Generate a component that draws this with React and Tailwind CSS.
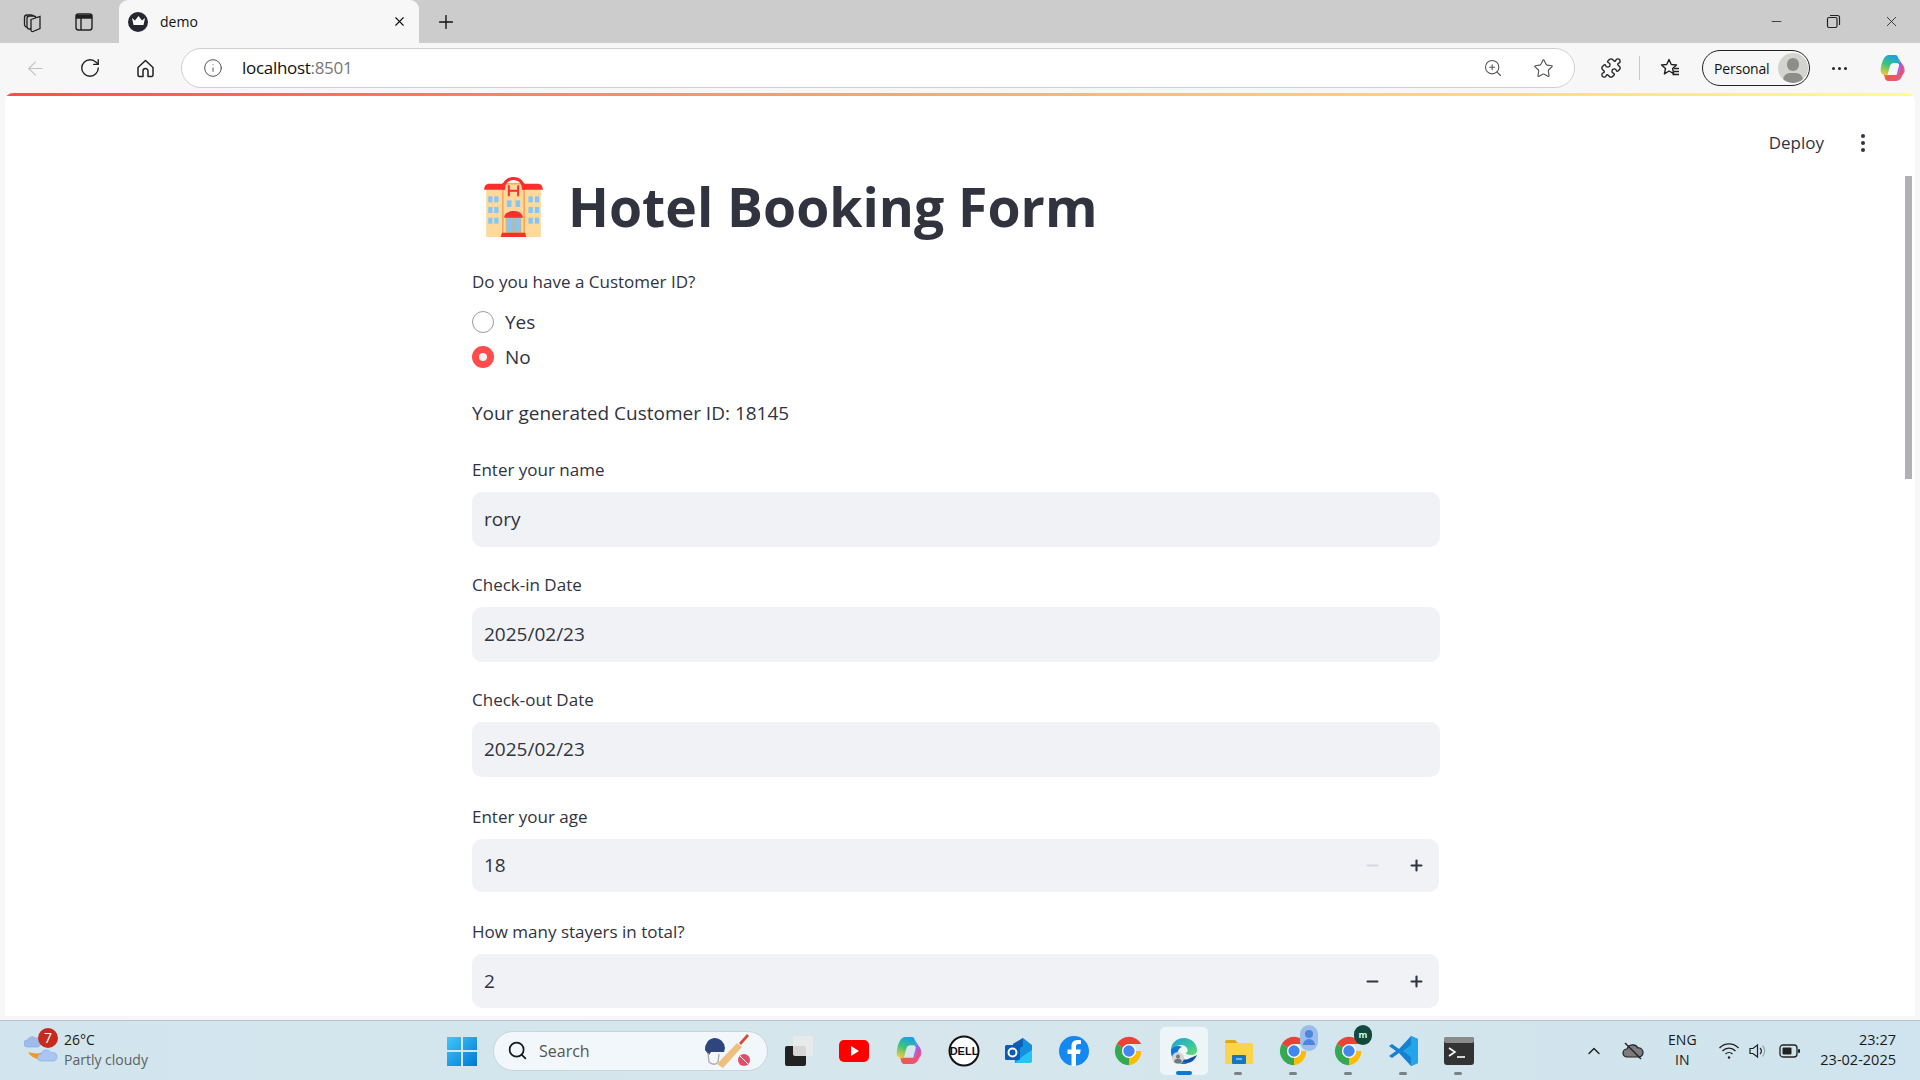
import { ArrowLeft, RotateCw, Info, ZoomIn, Star, Puzzle, Plus, X, Minus, ChevronUp, Search } from "lucide-react";

const uiFont = { fontFamily: '"Open Sans", "Noto Sans", sans-serif' };

function Workspaces() {
  return (
    <svg width="22" height="22" viewBox="0 0 22 22" fill="none" stroke="#222" strokeWidth="1.3">
      <rect x="2.5" y="4" width="9" height="12" rx="2.5" />
      <rect x="5" y="5" width="9" height="13" rx="2.5" fill="#ccc" />
      <path d="M9 8.5l9-3v12l-7 3a1.5 1.5 0 0 1-2-1.5z" fill="#ccc" />
    </svg>
  );
}

function VerticalTabs() {
  return (
    <svg width="20" height="20" viewBox="0 0 20 20" fill="none" stroke="#222" strokeWidth="1.4">
      <rect x="2" y="2" width="16" height="16" rx="2.5" />
      <path d="M2.5 3.5h15v2.5h-15z" fill="#222" />
      <path d="M7 6v12" />
    </svg>
  );
}

function HomeIcon() {
  return (
    <svg width="21" height="21" viewBox="0 0 21 21" fill="none" stroke="#222" strokeWidth="1.5" strokeLinejoin="round">
      <path d="M3 9.5L10.5 2.5 18 9.5V17a1.5 1.5 0 0 1-1.5 1.5H13V13a2.5 2.5 0 0 0-5 0v5.5H4.5A1.5 1.5 0 0 1 3 17z" />
    </svg>
  );
}

function Favorites() {
  return (
    <svg width="22" height="22" viewBox="0 0 22 22" fill="none" stroke="#222" strokeWidth="1.4" strokeLinejoin="round">
      <path d="M10 2.5l2.3 5 5.2.5-3.900 3.500 1.100 5.200L10 14l-4.600 2.900 1.100-5.400L2.500 8l5.200-.5z" />
      <path d="M15 11.500h5M15 14.500h5M13.500 17.500h6.500" />
    </svg>
  );
}

function Copilot({ size = 28, id = "a" }) {
  return (
    <svg width={size} height={size} viewBox="0 0 28 28">
      <defs>
        <linearGradient id={`copL${id}`} x1="0.6" y1="0" x2="0.2" y2="1">
          <stop offset="0" stopColor="#1aa0e8" />
          <stop offset="0.5" stopColor="#3cc47a" />
          <stop offset="1" stopColor="#f6c93a" />
        </linearGradient>
        <linearGradient id={`copR${id}`} x1="0.3" y1="0" x2="0.8" y2="1">
          <stop offset="0" stopColor="#2f6fe6" />
          <stop offset="0.6" stopColor="#a85ce8" />
          <stop offset="1" stopColor="#d96ad8" />
        </linearGradient>
        <linearGradient id={`copB${id}`} x1="0" y1="0" x2="1" y2="1">
          <stop offset="0" stopColor="#f5a030" />
          <stop offset="0.5" stopColor="#f0503c" />
          <stop offset="1" stopColor="#e84aa0" />
        </linearGradient>
      </defs>
      <path d="M10 1h6c1.500 0 2.500 1 3 2.500L21 9h-6c-2 0-3.500 1-4 3l-2.500 9H5C2 21 1 17 2 13 3 8 5 1 10 1z" fill={`url(#copL${id})`} />
      <path d="M15 1h1c1.500 0 2.500 1 3 2.500L25 13c1.500 4 .5 8-3 8h-4.500l2.500-9c.5-2-1-3-2.500-3H21l-2-5.500C18 2 17 1 15 1z" fill={`url(#copR${id})`} />
      <path d="M9 27c-1.500 0-2.500-1-3-2.500L5 21h12.500c2 0 3-1 3.500-3l3-8c1.500 8-1 17-7 17z" fill={`url(#copB${id})`} opacity="0.95" />
    </svg>
  );
}

function Chrome({ size = 26 }) {
  return (
    <svg width={size} height={size} viewBox="0 0 48 48">
      <path d="M24 24L6.700 14A20 20 0 0 1 41.300 14H24z" fill="#ea4335" />
      <path d="M24 24h17.300A20 20 0 0 1 24 44z" fill="#fbbc04" />
      <path d="M24 24v20A20 20 0 0 1 6.700 14z" fill="#34a853" />
      <circle cx="24" cy="24" r="10" fill="#fff" />
      <circle cx="24" cy="24" r="8" fill="#4285f4" />
    </svg>
  );
}

function Edge() {
  return (
    <svg width="30" height="30" viewBox="0 0 30 30">
      <defs>
        <linearGradient id="edgeA" x1="0" y1="0" x2="1" y2="1">
          <stop offset="0" stopColor="#2a9fd8" />
          <stop offset="0.6" stopColor="#37c6a0" />
          <stop offset="1" stopColor="#6fdc5f" />
        </linearGradient>
      </defs>
      <path d="M2 13C3 6 8 2 15 2c7 0 13 5 13 12 0 3-2 5-6 5-3 0-5-1-5-2 2-1 2-3 1-5-2-3-6-4-10-2-3 1.500-5 2-6 3z" fill="url(#edgeA)" />
      <path d="M2 13c3-3 8-4 11-2-3 1-5 4-4 8 1 4 5 8 10 8-2 1-3 1-5 1C7 28 1 22 2 13z" fill="#0c78d4" />
      <path d="M28 19c-2 5-6 8-10 8-3 0-6-2-7-5 3 2 7 2 10 0 3-1 5-2 7-3z" fill="#1450a8" />
      <circle cx="9" cy="22" r="6" fill="#d5d5d5" />
      <circle cx="9" cy="20.500" r="2" fill="#777" />
      <path d="M5 26c.5-2.500 2-3.500 4-3.500s3.500 1 4 3.500a6 6 0 0 1-8 0z" fill="#777" />
    </svg>
  );
}

function HotelEmoji() {
  const sideYs = [58, 90, 122];
  const sideXs = [12, 30, 133, 152];
  return (
    <svg width="59" height="60" viewBox="0 0 176 180" className="shrink-0">
      <rect x="6" y="30" width="164" height="150" fill="#ffd99c" />
      <rect x="56" y="20" width="64" height="160" fill="#ffd99c" stroke="#f4a95e" strokeWidth="5" />
      <path d="M0 38c0-12 6-18 16-18h44v18zM176 38c0-12-6-18-16-18h-44v18z" fill="#f92f2f" />
      <path d="M54 38V32C54 14 68 0 88 0s34 14 34 32v6h-9v-6c0-12-11-23-25-23S63 20 63 32v6z" fill="#f92f2f" />
      <path d="M74 25v33M102 25v33M74 41h28" stroke="#f92f2f" strokeWidth="6" fill="none" />
      {sideYs.map((y) => sideXs.map((x) => <rect key={`${x}-${y}`} x={x} y={y} width="13" height="18" fill="#85c6f5" />))}
      <rect x="68" y="70" width="14" height="20" fill="#85c6f5" />
      <rect x="94" y="70" width="14" height="20" fill="#85c6f5" />
      <rect x="66" y="120" width="44" height="46" fill="#85c6f5" stroke="#dcae7a" strokeWidth="3" />
      <path d="M88 120v46" stroke="#dcae7a" strokeWidth="6" />
      <path d="M60 122c0-12 12-20 28-20s28 8 28 20z" fill="#f92f2f" />
      <path d="M50 180l3-13h70l3 13z" fill="#f92f2f" />
    </svg>
  );
}

function Field({ label, value, children, className = "", inputClass = "h-[55px] w-full" }) {
  return (
    <div className={`flex flex-col ${className}`}>
      <div className="h-[25px] text-[17px] leading-[25px] text-[#31333f]">{label}</div>
      <div className={`mt-[10px] flex items-center rounded-[10px] bg-[#f0f2f6] pl-[12px] text-[19px] text-[#31333f] ${inputClass}`}>
        <span className="flex-1">{value}</span>
        {children}
      </div>
    </div>
  );
}

function NumberButtons({ minusOff }) {
  return (
    <div className="flex items-center gap-[27px] pr-[14px]">
      <Minus size={17} strokeWidth={3} className={minusOff ? "text-[#d5d8e2]" : "text-[#31333f]"} />
      <Plus size={17} strokeWidth={3} className="text-[#31333f]" />
    </div>
  );
}

function TaskIcon({ children, dot, active }) {
  return (
    <div className={`relative flex h-[48px] w-[48px] items-center justify-center rounded-[5px] ${active ? "bg-[#edf5f8]" : ""}`}>
      {children}
      {dot && <span className="absolute bottom-0 left-[19px] h-[3px] w-[8px] rounded-full bg-[#7b8184]" />}
      {active && <span className="absolute bottom-0 left-[16px] h-[4px] w-[16px] rounded-full bg-[#0a78d6]" />}
    </div>
  );
}

export default function App() {
  return (
    <div className="flex h-[1080px] w-[1920px] flex-col overflow-hidden bg-[#f7f7f7]" style={uiFont}>
      {/* tab strip */}
      <div className="flex h-[43px] items-center bg-[#cccccc]">
        <div className="flex w-[119px] items-center gap-[30px] pl-[22px]">
          <Workspaces />
          <VerticalTabs />
        </div>
        <div className="flex h-full w-[300px] items-center rounded-t-[9px] bg-[#f7f7f7] pl-[9px] pr-[12px]">
          <span className="flex h-[20px] w-[20px] items-center justify-center rounded-full bg-[#262730]">
            <svg width="13" height="11" viewBox="0 0 13 11"><path d="M0 2l3 2.500L6.500 0 10 4.500 13 2l-1.500 7h-10z" fill="#fff" /></svg>
          </span>
          <span className="ml-[12px] flex-1 text-[14px] text-[#111]">demo</span>
          <X size={15} strokeWidth={1.8} className="text-[#111]" />
        </div>
        <Plus size={22} strokeWidth={1.5} className="ml-[16px] text-[#111]" />
        <div className="flex-1" />
        <div className="flex items-center gap-[42px] pr-[20px] text-[#222]">
          <Minus size={15} strokeWidth={1.3} />
          <svg width="15" height="15" viewBox="0 0 15 15" fill="none" stroke="#222" strokeWidth="1.200">
            <rect x="1.500" y="3.500" width="9.500" height="10" rx="1.500" />
            <path d="M4 1.500h7.500a2 2 0 0 1 2 2V11" />
          </svg>
          <X size={17} strokeWidth={1.2} />
        </div>
      </div>

      {/* toolbar */}
      <div className="flex h-[50px] items-center">
        <ArrowLeft size={23} strokeWidth={1.2} className="ml-[24px] text-[#c4c4c4]" />
        <RotateCw size={22} strokeWidth={1.5} className="ml-[32px] text-[#222]" />
        <span className="ml-[34px]"><HomeIcon /></span>
        <div className="ml-[25px] flex h-[40px] w-[1394px] items-center rounded-full border border-[#d0d0d0] bg-white pl-[21px] pr-[20px]">
          <Info size={20} strokeWidth={1.2} className="text-[#555]" />
          <span className="ml-[19px] flex-1 text-[17px] tracking-[-0.3px] text-[#111]">localhost<span className="text-[#777]">:8501</span></span>
          <ZoomIn size={20} strokeWidth={1.3} className="text-[#555]" />
          <Star size={21} strokeWidth={1.3} className="ml-[30px] text-[#555]" />
        </div>
        <Puzzle size={22} strokeWidth={1.5} className="ml-[25px] text-[#222]" />
        <span className="ml-[17px] h-[24px] w-px bg-[#c8c8c8]" />
        <span className="ml-[19px]"><Favorites /></span>
        <div className="ml-[21px] flex h-[36px] w-[108px] items-center justify-between rounded-full border-[1.5px] border-[#222] pl-[11px] pr-[1px]">
          <span className="text-[14px] tracking-[-0.2px] text-[#111]">Personal</span>
          <span className="relative h-[30px] w-[30px] overflow-hidden rounded-full bg-[#d3d3cf]">
            <span className="absolute left-[9px] top-[5px] h-[13px] w-[12px] rounded-full bg-[#8d8d89]" />
            <span className="absolute left-[5px] top-[20px] h-[14px] w-[20px] rounded-full bg-[#8d8d89]" />
          </span>
        </div>
        <div className="ml-[22px] flex gap-[3px]">
          <span className="h-[3px] w-[3px] rounded-full bg-[#222]" />
          <span className="h-[3px] w-[3px] rounded-full bg-[#222]" />
          <span className="h-[3px] w-[3px] rounded-full bg-[#222]" />
        </div>
        <span className="ml-[32px]"><Copilot id="top" /></span>
      </div>

      {/* page */}
      <div className="relative mx-[5px] h-[923px] overflow-hidden rounded-t-[8px] bg-white">
        <div className="h-[3px] bg-gradient-to-r from-[#ff4b4b] to-[#ffff85]" />

        <div className="absolute right-[50px] top-[37px] flex items-center gap-[37px] text-[#31333f]">
          <span className="text-[17px]">Deploy</span>
          <div className="flex flex-col gap-[3px]">
            <span className="h-[4px] w-[4px] rounded-full bg-[#31333f]" />
            <span className="h-[4px] w-[4px] rounded-full bg-[#31333f]" />
            <span className="h-[4px] w-[4px] rounded-full bg-[#31333f]" />
          </div>
        </div>
        <div className="absolute right-[3px] top-[83px] h-[303px] w-[7px] bg-[#b0b0b5]" />

        <div className="ml-[467px] w-[968px] text-[#31333f]">
          <h1 className="mt-[77px] flex h-[68px] items-center pl-[12px] text-[53.500px] font-bold">
            <HotelEmoji />
            <span className="ml-[25px]">Hotel Booking Form</span>
          </h1>

          <div className="mt-[28px] h-[25px] text-[17px] leading-[25px]">Do you have a Customer ID?</div>
          <div className="mt-[14px] flex h-[28px] items-center text-[19px]">
            <span className="h-[22px] w-[22px] rounded-full border border-[#9a9ca3] bg-white" />
            <span className="ml-[11px]">Yes</span>
          </div>
          <div className="mt-[7px] flex h-[28px] items-center text-[19px]">
            <span className="flex h-[22px] w-[22px] items-center justify-center rounded-full bg-[#ff4b4b]">
              <span className="h-[8px] w-[8px] rounded-full bg-[#f0f2f6]" />
            </span>
            <span className="ml-[11px]">No</span>
          </div>
          <div className="mt-[27px] h-[30px] text-[19px] leading-[30px]">Your generated Customer ID: 18145</div>

          <div className="mt-[29px] flex flex-col gap-[25px]">
            <Field label="Enter your name" value="rory" />
            <Field label="Check-in Date" value="2025/02/23" />
            <Field label="Check-out Date" value="2025/02/23" />
            <Field label="Enter your age" value="18" className="mt-[2px]" inputClass="h-[53px] w-[967px]">
              <NumberButtons minusOff />
            </Field>
            <Field label="How many stayers in total?" value="2" className="mt-[2px]" inputClass="h-[54px] w-[967px]">
              <NumberButtons />
            </Field>
          </div>
        </div>
      </div>

      {/* taskbar */}
      <div className="relative mt-[4px] flex h-[60px] items-center border-t border-[#b4c3cc] bg-gradient-to-r from-[#d2e5ee] via-[#d6e6ec] to-[#cfe4ee]">
        <div className="flex w-[447px] items-center pl-[24px]">
          <div className="relative h-[36px] w-[36px]">
            <svg width="36" height="36" viewBox="0 0 36 36" className="absolute left-0 top-0">
              <path d="M4 19a15 13 0 0 0 25 3l-7-4c-5 3-12 3-18 1z" fill="#f29a1f" />
              <path d="M3 14a3.500 3.500 0 0 1 .5-7 5 5 0 0 1 8-2 4 4 0 0 1 2 9z" fill="#9dbcec" stroke="#7fa4dc" strokeWidth="0.600" />
              <path d="M17 28a3.500 3.500 0 0 1 0-7 5.500 5.500 0 0 1 10-1.500 4.500 4.500 0 0 1 3 8.500z" fill="#a8c6f0" stroke="#86a9e0" strokeWidth="0.600" />
            </svg>
            <span className="absolute left-[14px] top-[-5px] flex h-[20px] w-[20px] items-center justify-center rounded-full bg-[#c42b1c] text-[14px] text-white">7</span>
          </div>
          <div className="ml-[4px] flex flex-col text-[14px] leading-[20px]">
            <span className="mt-[-2px] text-[#1a1a1a]">26°C</span>
            <span className="text-[#5c6164]">Partly cloudy</span>
          </div>
        </div>

        <svg width="30" height="30" viewBox="0 0 30 30">
          <defs>
            <linearGradient id="win" x1="0" y1="0" x2="1" y2="1">
              <stop offset="0" stopColor="#3fc8fa" />
              <stop offset="1" stopColor="#0078d4" />
            </linearGradient>
          </defs>
          <path d="M0 1h14v13H0zM16 1h14v13H16zM0 16h14v14H0zM16 16h14v14H16z" fill="url(#win)" />
        </svg>

        <div className="ml-[16px] flex h-[40px] w-[275px] items-center rounded-full border border-[#c6d5dc] bg-[#f1f7fb] pl-[13px] pr-[11px]">
          <Search size={21} strokeWidth={2} className="text-[#1a1a1a]" />
          <span className="ml-[11px] flex-1 text-[16px] text-[#555]">Search</span>
          <svg width="50" height="36" viewBox="0 0 50 36" className="ml-[-3px] mr-[3px]">
            <path d="M2 17a10 11 0 0 1 20-2l-1 4H8l-2 3z" fill="#2f4580" />
            <path d="M5 20l1 9c3 3 7 3 9 0l1-8" fill="none" stroke="#aaa" strokeWidth="1.300" />
            <path d="M14 31L34 10l5 4-19 21z" fill="#eec07d" />
            <path d="M36 10l8-9 2 2-8 9z" fill="#d84a3a" />
            <circle cx="41" cy="27" r="6" fill="#e84a6a" />
            <path d="M37 23l8 8" stroke="#fff" strokeWidth="1" />
          </svg>
        </div>

        <div className="ml-[7px] flex items-center gap-[7px]">
          <TaskIcon>
            <span className="relative h-[30px] w-[30px]">
              <span className="absolute bottom-0 left-[1px] h-[20px] w-[21px] rounded-[2px] bg-[#222]" />
              <span className="absolute right-[1px] top-0 h-[20px] w-[20px] rounded-[2px] bg-[#eaeaea] opacity-90" />
            </span>
          </TaskIcon>
          <TaskIcon>
            <svg width="30" height="30" viewBox="0 0 30 30">
              <rect x="0" y="4" width="30" height="22" rx="5" fill="#f00" />
              <path d="M12 10l8 5-8 5z" fill="#fff" />
            </svg>
          </TaskIcon>
          <TaskIcon><Copilot size={29} id="bar" /></TaskIcon>
          <TaskIcon>
            <svg width="32" height="32" viewBox="0 0 32 32">
              <circle cx="16" cy="16" r="14.500" fill="#fff" stroke="#111" strokeWidth="2" />
              <text x="16" y="20" textAnchor="middle" fontSize="11" fontWeight="700" fill="#111" fontFamily="Liberation Sans, sans-serif">DELL</text>
            </svg>
          </TaskIcon>
          <TaskIcon>
            <svg width="30" height="30" viewBox="0 0 30 30">
              <path d="M9 8l10-6 9 7v15a3 3 0 0 1-3 3H11z" fill="#1490df" />
              <path d="M9 8l10-6v8l-10 6z" fill="#0f5fb5" />
              <path d="M28 14l-9 6-8 7h14a3 3 0 0 0 3-3z" fill="#28c4f0" />
              <rect x="1" y="9" width="15" height="15" rx="1.500" fill="#0a5bb5" />
              <circle cx="8.500" cy="16.500" r="4" fill="none" stroke="#fff" strokeWidth="2" />
            </svg>
          </TaskIcon>
          <TaskIcon>
            <svg width="30" height="30" viewBox="0 0 30 30">
              <circle cx="15" cy="15" r="15" fill="#1487f0" />
              <path d="M17 30V18h4l.7-4.500H17v-3c0-1.500.7-2.500 2.500-2.500H22V4.200C21 4 19.800 4 18.500 4 15 4 12.500 6 12.500 10v3.500H8.500V18h4v12z" fill="#fff" />
            </svg>
          </TaskIcon>
          <TaskIcon><Chrome size={34} /></TaskIcon>
          <TaskIcon active><Edge /></TaskIcon>
          <TaskIcon dot>
            <svg width="30" height="30" viewBox="0 0 30 30">
              <path d="M1 6a2 2 0 0 1 2-2h8l3 3h-13z" fill="#e2a81a" />
              <rect x="1" y="7" width="28" height="21" rx="1.500" fill="#fcd34d" />
              <rect x="8" y="19" width="14" height="9" rx="1" fill="#1477c4" />
              <path d="M12 23h6" stroke="#bfe0fa" strokeWidth="1.200" />
            </svg>
          </TaskIcon>
          <TaskIcon dot>
            <span className="relative">
              <Chrome size={34} />
              <span className="absolute right-[-7px] top-[-9px] flex h-[26px] w-[18px] flex-col items-center justify-center rounded-full bg-[#9cbcec]">
                <span className="h-[8px] w-[8px] rounded-full bg-[#4f84dc]" />
                <span className="mt-[1px] h-[6px] w-[12px] rounded-t-full bg-[#4f84dc]" />
              </span>
            </span>
          </TaskIcon>
          <TaskIcon dot>
            <span className="relative">
              <Chrome size={34} />
              <span className="absolute right-[-6px] top-[-9px] flex h-[20px] w-[18px] items-center justify-center rounded-full bg-[#114a3d] text-[9px] font-bold text-[#cfe]">m</span>
            </span>
          </TaskIcon>
          <TaskIcon dot>
            <svg width="30" height="32" viewBox="0 0 30 32">
              <path d="M22 1L10 14 3 9 0 11l7 5-7 5 3 2 7-5 12 13 7-3V4z" fill="#1681d0" />
              <path d="M22 1l7 3v24l-7 3V22L14 16l8-6z" fill="#24a5ea" />
            </svg>
          </TaskIcon>
          <TaskIcon dot>
            <svg width="30" height="28" viewBox="0 0 30 28">
              <rect x="0" y="0" width="30" height="28" rx="3" fill="#333" />
              <rect x="0" y="0" width="30" height="6" rx="2" fill="#8b8b8b" />
              <path d="M5 11l6 4-6 4" fill="none" stroke="#fff" strokeWidth="1.600" />
              <path d="M13 20h8" stroke="#fff" strokeWidth="1.600" />
            </svg>
          </TaskIcon>
        </div>

        <div className="flex-1" />

        <div className="flex items-center pr-[24px] text-[#1a1a1a]">
          <ChevronUp size={20} strokeWidth={1.6} />
          <svg width="22" height="20" viewBox="0 0 22 20" className="ml-[18px]">
            <path d="M5 16a4 4 0 0 1 0-8 6 6 0 0 1 11-1 4.500 4.500 0 0 1 1 9z" fill="#7c7c7c" stroke="#222" strokeWidth="1.200" />
            <path d="M3 2l16 16" stroke="#222" strokeWidth="1.500" />
          </svg>
          <div className="ml-[18px] flex w-[40px] flex-col items-center text-[14px] leading-[20px]">
            <span className="mt-[-2px]">ENG</span>
            <span>IN</span>
          </div>
          <svg width="22" height="18" viewBox="0 0 22 18" fill="none" stroke="#222" strokeWidth="1.300" className="ml-[16px]">
            <path d="M1.500 6a13 13 0 0 1 19 0M4.500 9a9 9 0 0 1 13 0M7.500 12a5 5 0 0 1 7 0" />
            <circle cx="11" cy="15.500" r="1.200" fill="#222" stroke="none" />
          </svg>
          <svg width="20" height="18" viewBox="0 0 20 18" fill="none" stroke="#222" strokeWidth="1.200" className="ml-[9px]">
            <path d="M1 6.500h3L8.500 3v12L4 11.500H1z" />
            <path d="M11 6a4 4 0 0 1 0 6" />
            <path d="M13.500 3.500a8 8 0 0 1 0 11" stroke="#9aa" />
          </svg>
          <svg width="22" height="14" viewBox="0 0 22 14" className="ml-[10px]">
            <rect x="1" y="1" width="17" height="12" rx="3" fill="none" stroke="#222" strokeWidth="1.300" />
            <rect x="3.500" y="3.500" width="9" height="7" rx="1" fill="#222" />
            <rect x="19" y="5" width="2" height="4" rx="1" fill="#222" />
          </svg>
          <div className="ml-[19px] flex flex-col items-end text-[14.500px] leading-[20px]">
            <span className="mt-[-2px]">23:27</span>
            <span>23-02-2025</span>
          </div>
        </div>
      </div>
    </div>
  );
}
